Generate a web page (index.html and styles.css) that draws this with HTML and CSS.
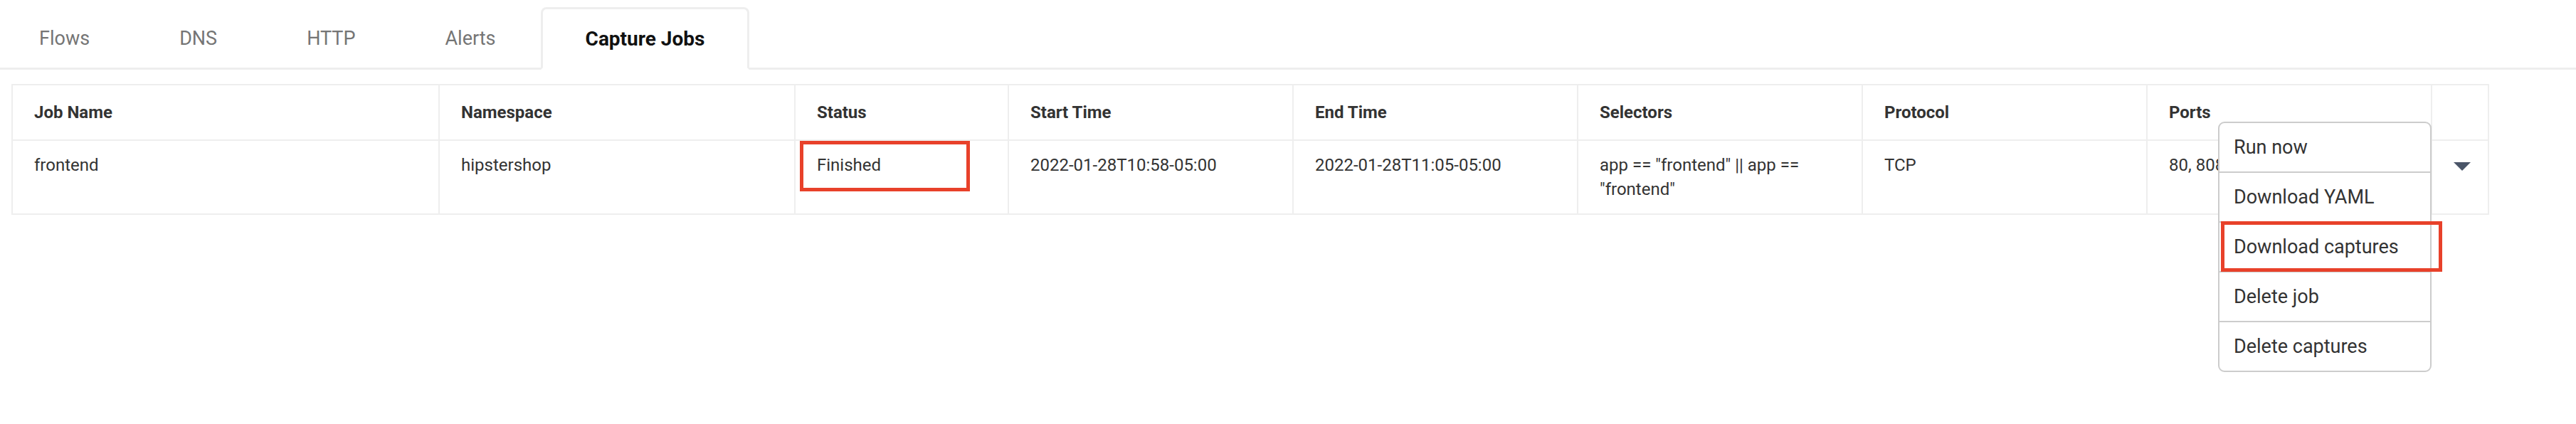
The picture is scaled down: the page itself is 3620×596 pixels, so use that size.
FILE: index.html
```html
<!DOCTYPE html>
<html lang="en">
<head>
<meta charset="utf-8">
<title>Capture Jobs</title>
<link rel="stylesheet" href="styles.css">
</head>
<body>
<div class="page">
  <nav class="tabs">
    <div class="tab">Flows</div>
    <div class="tab">DNS</div>
    <div class="tab">HTTP</div>
    <div class="tab">Alerts</div>
    <div class="tab active">Capture Jobs</div>
  </nav>

  <div class="table-wrap">
    <table class="jobs">
      <colgroup>
        <col class="c-name">
        <col class="c-ns">
        <col class="c-status">
        <col class="c-time">
        <col class="c-time">
        <col class="c-sel">
        <col class="c-proto">
        <col class="c-ports">
        <col class="c-act">
      </colgroup>
      <thead>
        <tr>
          <th>Job Name</th>
          <th>Namespace</th>
          <th>Status</th>
          <th>Start Time</th>
          <th>End Time</th>
          <th>Selectors</th>
          <th>Protocol</th>
          <th>Ports</th>
          <th></th>
        </tr>
      </thead>
      <tbody>
        <tr>
          <td>frontend</td>
          <td>hipstershop</td>
          <td class="status-cell">Finished<span class="highlight status-hl"></span></td>
          <td>2022-01-28T10:58-05:00</td>
          <td>2022-01-28T11:05-05:00</td>
          <td>app == "frontend" || app == "frontend"</td>
          <td>TCP</td>
          <td>80, 8080</td>
          <td class="act-cell"><span class="caret"></span></td>
        </tr>
      </tbody>
    </table>

    <ul class="menu">
      <li class="menu-item">Run now</li>
      <li class="menu-item">Download YAML</li>
      <li class="menu-item">Download captures<span class="highlight menu-hl"></span></li>
      <li class="menu-item">Delete job</li>
      <li class="menu-item">Delete captures</li>
    </ul>
  </div>
</div>
</body>
</html>
```

FILE: styles.css
```css
* {
  box-sizing: border-box;
}

html, body {
  margin: 0;
  padding: 0;
  background: #ffffff;
}

body {
  min-height: 596px;
  font-family: Roboto, "Noto Sans", "Liberation Sans", sans-serif;
  color: #333333;
}

.page {
  min-height: 596px;
  padding: 0 0 0 16px;
}

/* ---------- Tabs ---------- */
.tabs {
  display: flex;
  align-items: flex-end;
  margin-left: -24px;
  padding-top: 10px;
  border-bottom: 3px solid #eeeeee;
}

.tab {
  display: flex;
  align-items: center;
  height: 88px;
  margin-bottom: -3px;
  padding: 0 60px;
  border: 3px solid transparent;
  border-radius: 8px 8px 0 0;
  font-size: 27px;
  color: #757575;
  white-space: nowrap;
}

.tab.active {
  background: #ffffff;
  border-color: #eeeeee;
  border-bottom-color: #ffffff;
  color: #111111;
  font-size: 28px;
  font-weight: 700;
}

/* ---------- Table ---------- */
.table-wrap {
  position: relative;
  margin-top: 20px;
  width: 3482px;
}

.jobs {
  border-collapse: collapse;
  table-layout: fixed;
  width: 3482px;
  font-size: 24px;
  line-height: 34px;
  color: #333333;
}

.c-name { width: 600px; }
.c-ns { width: 500px; }
.c-status { width: 300px; }
.c-time { width: 400px; }
.c-sel { width: 400px; }
.c-proto { width: 400px; }
.c-ports { width: 400px; }
.c-act { width: 80px; }

.jobs th,
.jobs td {
  border: 2px solid #eeeeee;
  text-align: left;
}

.jobs th {
  padding: 21px 30px;
  font-weight: 700;
  vertical-align: middle;
}

.jobs td {
  padding: 17px 30px;
  vertical-align: top;
  font-weight: 400;
}

.jobs td.status-cell {
  position: relative;
}

.jobs td.act-cell {
  padding: 17px 0 17px 6px;
  text-align: center;
}

.caret {
  display: inline-block;
  width: 0;
  height: 0;
  margin-top: 13px;
  vertical-align: top;
  border-left: 12px solid transparent;
  border-right: 12px solid transparent;
  border-top: 12px solid #4a5568;
}

/* ---------- Annotation boxes ---------- */
.highlight {
  position: absolute;
  border: 5px solid #e8412a;
  pointer-events: none;
}

.status-hl {
  left: 6px;
  top: 0;
  width: 239px;
  height: 71px;
}

/* ---------- Dropdown menu ---------- */
.menu {
  position: absolute;
  z-index: 2;
  left: 3101px;
  top: 53px;
  width: 300px;
  margin: 0;
  padding: 0;
  list-style: none;
  background: #ffffff;
  border: 2px solid #cccccc;
  border-radius: 9px;
  font-size: 27px;
  color: #333333;
}

.menu-item {
  position: relative;
  display: flex;
  align-items: center;
  height: 70px;
  padding: 0 20px;
  border-bottom: 2px solid #cccccc;
  white-space: nowrap;
}

.menu-item:last-child {
  border-bottom: 0;
  height: 68px;
}

.menu-hl {
  left: 2px;
  top: -2px;
  width: 311px;
  height: 71px;
}
```
